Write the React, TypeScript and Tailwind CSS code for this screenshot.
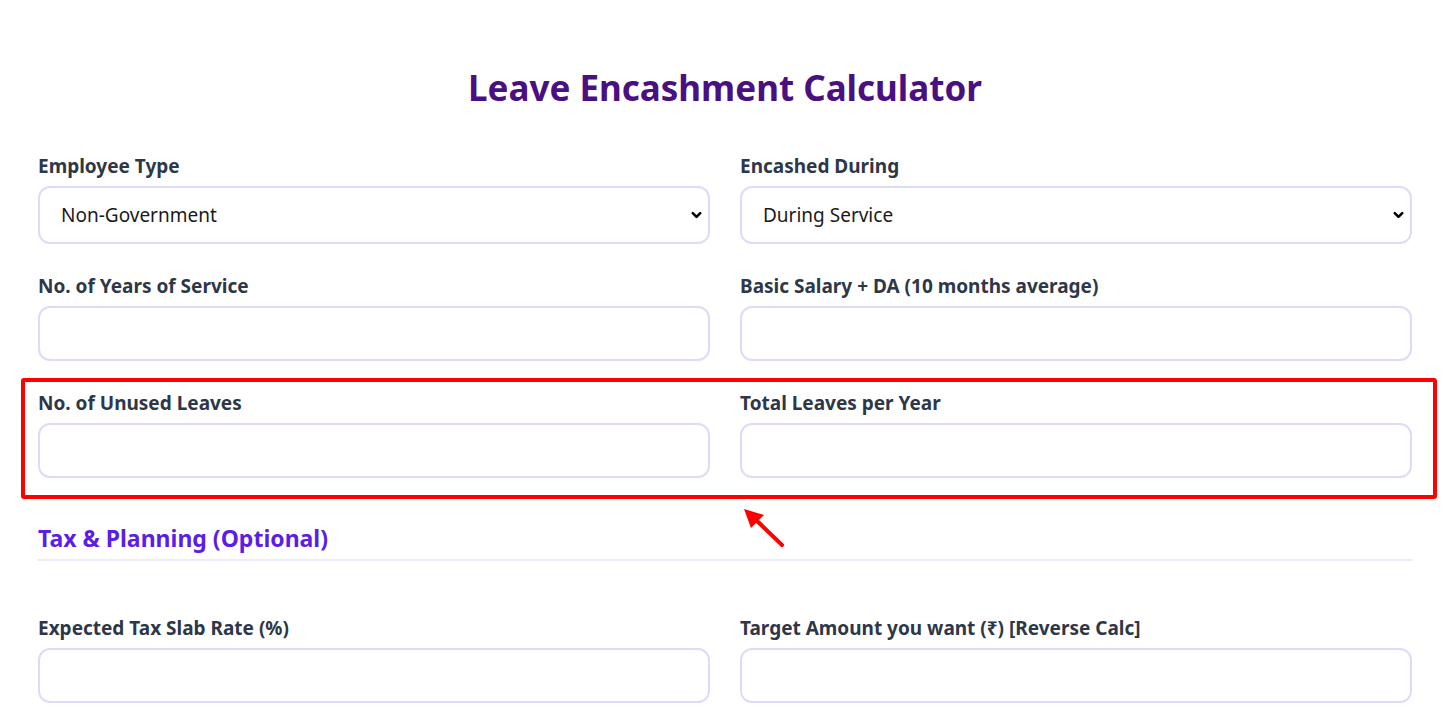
import { ChevronDown } from "lucide-react";

const font = { fontFamily: '"Noto Sans", "Open Sans", sans-serif' };

function Label({ children }: { children: React.ReactNode }) {
  return <label className="block text-[19px] font-bold leading-[24px] text-[#2d3748]">{children}</label>;
}

function SelectField({ label, value }: { label: string; value: string }) {
  return (
    <div className="flex flex-col gap-2">
      <Label>{label}</Label>
      <div className="relative">
        <select
          defaultValue={value}
          className="h-[58px] w-full appearance-none rounded-[12px] border-2 border-[#dcdcf8] bg-white px-[21px] text-[19px] text-[#1a1a1a] outline-none"
          style={font}
        >
          <option>{value}</option>
        </select>
        <ChevronDown
          size={15}
          strokeWidth={4}
          className="pointer-events-none absolute right-[6px] top-1/2 -translate-y-1/2 text-black"
        />
      </div>
    </div>
  );
}

function InputField({ label }: { label: string }) {
  return (
    <div className="flex flex-col gap-2">
      <Label>{label}</Label>
      <input
        type="text"
        className="h-[55px] w-full rounded-[12px] border-2 border-[#dcdcf8] bg-white px-[21px] text-[19px] outline-none"
        style={font}
      />
    </div>
  );
}

export default function App() {
  return (
    <div className="relative min-h-screen bg-white" style={font}>
      <div className="mx-auto w-[1374px] pt-[66px]">
        <h1 className="text-center text-[35px] font-bold leading-[44px] text-[#4a0f80]">
          Leave Encashment Calculator
        </h1>

        <div className="mt-[44px] grid grid-cols-2 gap-x-[30px] gap-y-[30px]">
          <SelectField label="Employee Type" value="Non-Government" />
          <SelectField label="Encashed During" value="During Service" />
          <InputField label="No. of Years of Service" />
          <InputField label="Basic Salary + DA (10 months average)" />
          <InputField label="No. of Unused Leaves" />
          <InputField label="Total Leaves per Year" />
        </div>

        <div className="mt-[45px] border-b-2 border-[#ececf6] pb-[6px]">
          <h2 className="text-[23px] font-bold leading-[30px] text-[#5a1ee6]">Tax &amp; Planning (Optional)</h2>
        </div>

        <div className="mt-[55px] grid grid-cols-2 gap-x-[30px]">
          <InputField label="Expected Tax Slab Rate (%)" />
          <InputField label="Target Amount you want (₹) [Reverse Calc]" />
        </div>
      </div>

      {/* annotation overlay */}
      <div className="pointer-events-none absolute left-[21px] top-[378px] h-[121px] w-[1416px] rounded-[3px] border-[4px] border-[#ff0000]" />
      <svg
        className="pointer-events-none absolute left-[738px] top-[503px]"
        width="50"
        height="48"
        viewBox="0 0 50 48"
      >
        <line x1="44" y1="42" x2="16" y2="15" stroke="#ff0000" strokeWidth="4" strokeLinecap="round" />
        <polygon points="6,6 26,12 13,25" fill="#ff0000" />
      </svg>
    </div>
  );
}
